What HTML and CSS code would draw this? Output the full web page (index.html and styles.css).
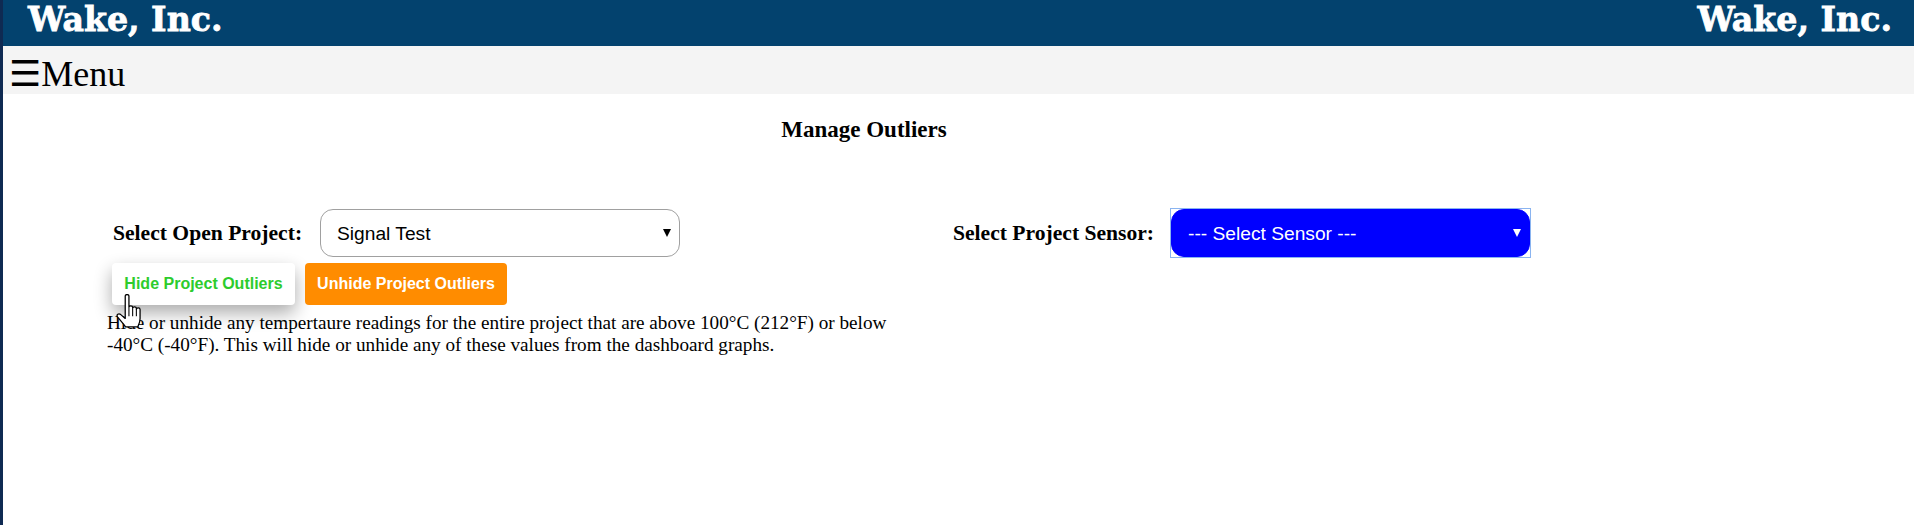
FILE: index.html
```html
<!DOCTYPE html>
<html lang="en">
<head>
<meta charset="utf-8">
<title>Manage Outliers</title>
<link rel="stylesheet" href="styles.css">
</head>
<body>
<div class="page">
  <header class="brand">
    <span class="brand-name">Wake, Inc.</span>
    <span class="brand-name">Wake, Inc.</span>
  </header>
  <nav class="menu-bar"><span class="menu-icon">☰</span>Menu</nav>
  <main class="content">
    <h1 class="title">Manage Outliers</h1>
    <div class="selectors">
      <div class="left-col">
        <label class="field-label">Select Open Project:</label>
        <div class="picker-wrap"><select class="picker"><option>Signal Test</option></select></div>
      </div>
      <div class="right-col">
        <label class="field-label">Select Project Sensor:</label>
        <div class="picker-wrap picker-wrap-active"><select class="picker picker-active"><option>--- Select Sensor ---</option></select></div>
      </div>
    </div>
    <div class="actions">
      <button class="btn btn-hide">Hide Project Outliers</button>
      <button class="btn btn-unhide">Unhide Project Outliers</button>
      <svg class="cursor" width="28" height="35" viewBox="0 0 26 33" aria-hidden="true">
        <path d="M8.500 2c0-2 3.500-2 3.500 0v10.500c0-1.800 3.500-1.800 3.500 0v1c0-1.800 3.500-1.800 3.500 0v1c0-1.800 3.500-1.800 3.500 0V23c0 3.500-1.200 5.500-2.200 8H8.800C7 28 3.500 24.500 1.200 21.500c-1.200-2 1-3.500 2.800-2.300l4.500 3.800z" fill="#fff" stroke="#000" stroke-width="1.200" stroke-linejoin="round"/>
        <path d="M12 13v8M15.500 14v7M19 15v6" stroke="#000" stroke-width="1" fill="none"/>
      </svg>
    </div>
    <p class="note">Hide or unhide any tempertaure readings for the entire project that are above 100°C (212°F) or below -40°C (-40°F). This will hide or unhide any of these values from the dashboard graphs.</p>
  </main>
</div>
</body>
</html>
```
FILE: styles.css
```css
* { box-sizing: border-box; }
html, body { margin: 0; padding: 0; height: 100%; background: #fff; }
body { overflow: hidden; font-family: "Liberation Serif", serif; color: #000; }
.page { height: 100%; border-left: 3px solid #0f2a52; }
.brand {
  height: 46px; background: #03426e; color: #fff;
  display: flex; justify-content: space-between; align-items: flex-start;
  padding: 0 22px 0 25px;
}
.brand-name { font-family: "DejaVu Serif", serif; font-weight: 700; font-size: 33.200px; line-height: 40px; -webkit-text-stroke: .8px #fff; }
.menu-bar { height: 48px; background: #f4f4f4; font-size: 36px; line-height: 56px; padding-left: 6px; display: flex; }
.menu-icon { font-family: "DejaVu Sans", sans-serif; }
.content { position: relative; }
.title { margin: 0 0 0 -4px; padding-top: 22px; height: 115px; width: 1730px; text-align: center; font-size: 23px; line-height: 28px; font-weight: 700; }
.selectors { display: flex; height: 48px; padding-left: 110px; }
.left-col { display: flex; align-items: center; width: 840px; }
.right-col { display: flex; align-items: center; }
.field-label { font-size: 21.600px; font-weight: 700; }
.left-col .field-label { width: 207px; }
.right-col .field-label { width: 218px; }
.picker-wrap { position: relative; width: 360px; height: 48px; }
.picker-wrap::after {
  content: ""; position: absolute; right: 9px; top: 20px;
  border-left: 4.500px solid transparent; border-right: 4.500px solid transparent; border-top: 8px solid #000;
}
.picker-wrap-active { width: 359px; outline: 1.500px solid #8ab4f0; }
.picker-wrap-active::after { border-top-color: #fff; }
.picker {
  display: block; width: 100%; height: 100%; appearance: none; border: 1px solid #a0a0a0; border-radius: 13px;
  background: #fff; color: #000; font-family: "Liberation Sans", sans-serif; font-size: 19.200px;
  padding: 0 16px;
}
.picker-active { background: #00f; color: #fff; border-color: #00f; }
.actions { position: relative; display: flex; gap: 10px; padding: 6px 0 0 109px; }
.btn { height: 42px; border: 0; border-radius: 4px; font-family: "Liberation Sans", sans-serif; font-size: 16px; font-weight: 700; padding: 0 12px; }
.btn-hide { width: 183px; background: #fff; color: #2dcc2d; box-shadow: 0 8px 18px rgba(0,0,0,.33); }
.btn-unhide { width: 202px; background: #ff8c00; color: #fff; }
.cursor { position: absolute; left: 113px; top: 37px; }
.note { margin: 7px 0 0 104px; width: 800px; font-size: 19.200px; line-height: 22px; }
```
